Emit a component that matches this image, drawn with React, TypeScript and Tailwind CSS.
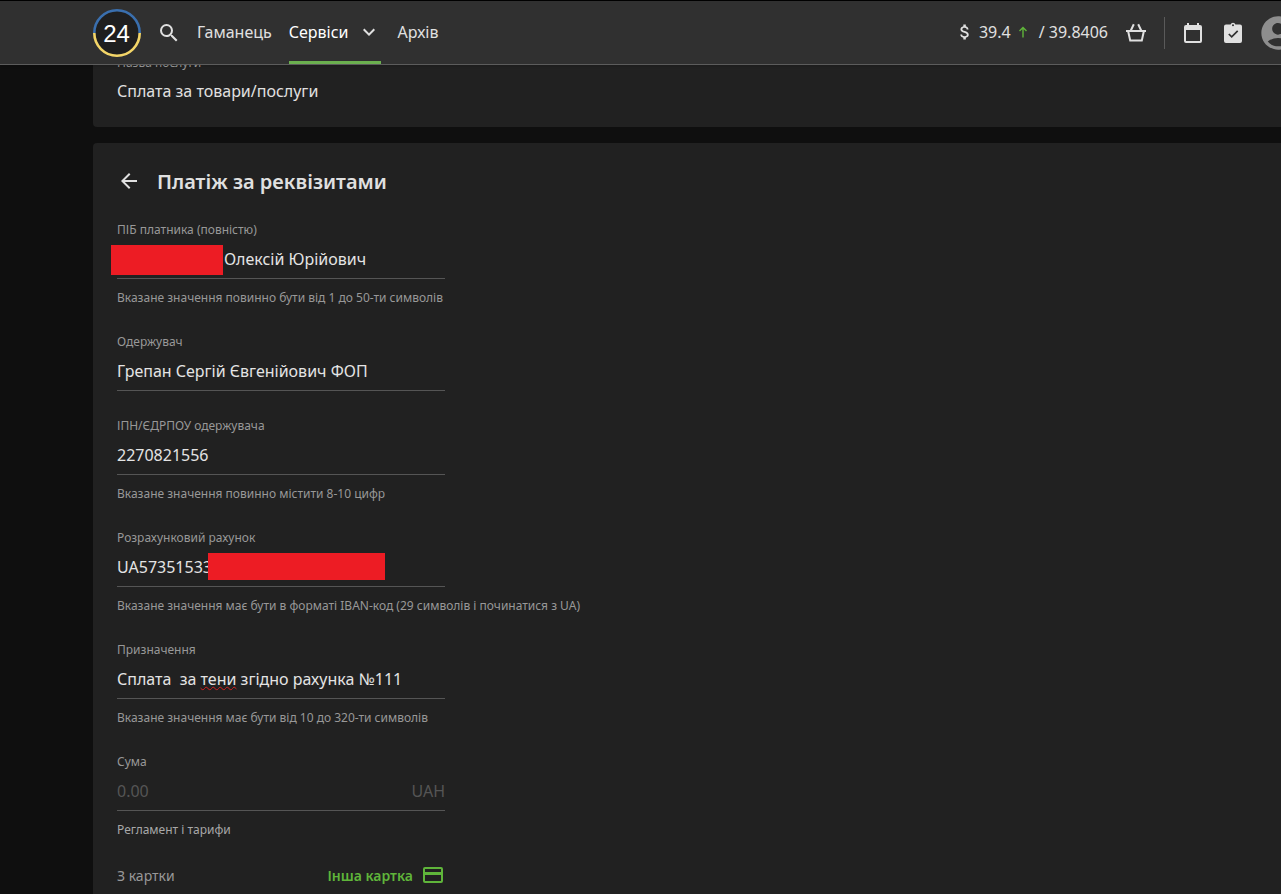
import React, { useState } from "react";
import { MdAccountCircle, MdArrowBack, MdAttachMoney, MdExpandMore, MdSearch } from "react-icons/md";

function Logo() {
  return (
    <svg viewBox="0 0 48 48" className="size-12 shrink-0" role="img" aria-label="24">
      <circle cx="24" cy="24" r="22.8" fill="#1f1f1f" />
      <path d="M1.3 24a22.7 22.7 0 0 1 45.4 0" fill="none" stroke="#3a6fae" strokeWidth="2.6" />
      <path d="M1.3 24a22.7 22.7 0 0 0 45.4 0" fill="none" stroke="#f3d568" strokeWidth="2.6" />
      <text x="23.5" y="32.5" textAnchor="middle" fontSize="24" fill="#ffffff" fontFamily="'Liberation Sans', sans-serif">
        24
      </text>
    </svg>
  );
}

function BasketIcon() {
  return (
    <svg viewBox="0 0 24 24" className="size-6" fill="none" stroke="currentColor" strokeWidth="2" aria-hidden="true">
      <path d="M2 10h20M4.2 10.5l2 9h11.6l2-9M6.8 9.5l3-6.2M17.2 9.5l-3-6.2" />
    </svg>
  );
}

function RiseIcon() {
  return (
    <svg viewBox="0 0 12 12" className="size-3" fill="none" stroke="currentColor" strokeWidth="1.4" aria-hidden="true">
      <path d="M6 11.5V1.5M2.5 5L6 1.5 9.5 5" />
    </svg>
  );
}

function CalendarIcon() {
  return (
    <svg viewBox="0 0 24 24" className="size-6" fill="currentColor" aria-hidden="true">
      <path d="M19 20H5V9h14v11M16 2v2H8V2H6v2H5a2 2 0 0 0-2 2v14a2 2 0 0 0 2 2h14a2 2 0 0 0 2-2V6a2 2 0 0 0-2-2h-1V2h-2z" fillRule="evenodd" />
    </svg>
  );
}

function ClipboardIcon() {
  return (
    <svg viewBox="0 0 24 24" className="size-6" aria-hidden="true">
      <path
        fill="currentColor"
        fillRule="evenodd"
        d="M19 3.5h-4.6a2.5 2.5 0 0 0-4.8 0H5a2 2 0 0 0-2 2V20a2 2 0 0 0 2 2h14a2 2 0 0 0 2-2V5.500a2 2 0 0 0-2-2zm-7-.2a1 1 0 1 1 0 2 1 1 0 0 1 0-2z"
      />
      <path d="M7.8 13l2.900 2.900 6-6" fill="none" stroke="#303030" strokeWidth="1.7" />
    </svg>
  );
}

function CardIcon() {
  return (
    <svg viewBox="0 0 24 24" className="size-6" fill="currentColor" aria-hidden="true">
      <path fillRule="evenodd" d="M20 4H4a2 2 0 0 0-2 2v12a2 2 0 0 0 2 2h16a2 2 0 0 0 2-2V6a2 2 0 0 0-2-2zm0 14H4v-6h16v6zm0-9H4V6h16v3z" />
    </svg>
  );
}

type FieldProps = {
  id: string;
  label: string;
  hint?: string;
  children: React.ReactNode;
};

function Field({ id, label, hint, children }: FieldProps) {
  return (
    <div className="w-[328px]">
      <label htmlFor={id} className="block h-5 text-xs leading-[22px] text-[#989898]">
        {label}
      </label>
      <div className="relative flex h-10 items-center border-b border-[#555555]">{children}</div>
      {hint && <p className="mt-2 h-5 text-xs leading-[22px] whitespace-nowrap text-[#989898]">{hint}</p>}
    </div>
  );
}

const inputClass = "w-full min-w-0 flex-1 bg-transparent text-base text-[#e4e4e4] outline-none placeholder:text-[#555555]";

export default function App() {
  const [payer, setPayer] = useState("Олексій Юрійович");
  const [recipient, setRecipient] = useState("Грепан Сергій Євгенійович ФОП");
  const [taxId, setTaxId] = useState("2270821556");
  const [account, setAccount] = useState("UA57351533");
  const [amount, setAmount] = useState("");

  return (
    <div className="flex h-screen flex-col overflow-hidden bg-[#0f0f0f] font-['Noto_Sans','Open_Sans',sans-serif] text-[#e0e0e0]">
      <header className="z-10 flex h-[65px] shrink-0 items-center gap-4 border-t border-b border-t-black border-b-[#5c5c5c] bg-[#303030] pl-[93px] shadow-sm">
        <a href="#home" aria-label="Приват24">
          <Logo />
        </a>
        <button type="button" aria-label="Пошук">
          <MdSearch className="size-6" />
        </button>
        <nav className="flex h-full items-center gap-[17px] text-base">
          <a href="#wallet" className="pb-0.5">Гаманець</a>
          <a href="#services" className="flex h-full items-center gap-2 border-t border-b-3 border-t-transparent border-b-[#6bb04f] text-white">
            Сервіси
            <MdExpandMore className="size-6 text-[#e0e0e0]" />
          </a>
          <a href="#archive" className="pb-0.5">Архів</a>
        </nav>
        <div className="-mr-[17px] ml-auto flex shrink-0 items-center gap-4">
          <a href="#rates" className="flex items-center pb-0.5 text-base whitespace-nowrap">
            <MdAttachMoney className="mr-1 size-5" />
            39.4
            <span className="mr-2.5 ml-1.5 text-[#5fb53a]">
              <RiseIcon />
            </span>
            / 39.8406
          </a>
          <button type="button" aria-label="Кошик">
            <BasketIcon />
          </button>
          <div className="h-8 w-px bg-[#5a5a5a]" />
          <button type="button" aria-label="Календар">
            <CalendarIcon />
          </button>
          <button type="button" aria-label="Завдання">
            <ClipboardIcon />
          </button>
          <button type="button" aria-label="Профіль" className="-ml-[3px]">
            <MdAccountCircle className="size-10 text-[#8e8e8e]" />
          </button>
        </div>
      </header>

      <main className="min-h-0 flex-1 overflow-y-auto pl-[93px] [scrollbar-width:none]">
        <section className="-mt-3.5 rounded-l bg-[#212121] px-6 pb-4">
          <h2 className="h-5 text-xs leading-6 text-[#989898]">Назва послуги</h2>
          <p className="flex h-10 items-center text-base">Сплата за товари/послуги</p>
        </section>

        <section className="mt-4 rounded-l bg-[#212121] px-6 py-6">
          <div className="flex h-7 items-center gap-4">
            <button type="button" aria-label="Назад">
              <MdArrowBack className="size-6" />
            </button>
            <h1 className="pt-0.5 text-xl font-semibold">Платіж за реквізитами</h1>
          </div>

          <form className="mt-6 flex flex-col gap-6">
            <Field id="payer" label="ПІБ платника (повністю)" hint="Вказане значення повинно бути від 1 до 50-ти символів">
              <span className="mr-px mb-[3px] -ml-1.5 h-[30px] w-28 shrink-0 self-end bg-[#ed1c24]" />
              <input id="payer" className={inputClass} value={payer} onChange={(e) => setPayer(e.target.value)} />
            </Field>
            <Field id="recipient" label="Одержувач">
              <input id="recipient" className={inputClass} value={recipient} onChange={(e) => setRecipient(e.target.value)} />
            </Field>
            <Field id="tax" label="ІПН/ЄДРПОУ одержувача" hint="Вказане значення повинно містити 8-10 цифр">
              <input id="tax" className={inputClass} value={taxId} onChange={(e) => setTaxId(e.target.value)} />
            </Field>
            <Field id="account" label="Розрахунковий рахунок" hint="Вказане значення має бути в форматі IBAN-код (29 символів і починатися з UA)">
              <input id="account" className={inputClass} value={account} onChange={(e) => setAccount(e.target.value)} />
              <span className="absolute top-1.5 left-[91px] h-[27px] w-[177px] bg-[#ed1c24]" />
            </Field>
            <Field id="purpose" label="Призначення" hint="Вказане значення має бути від 10 до 320-ти символів">
              <div
                id="purpose"
                role="textbox"
                aria-label="Призначення"
                contentEditable
                suppressContentEditableWarning
                className="w-full text-base whitespace-pre text-[#e4e4e4] outline-none"
              >
                {"Сплата  за "}
                <span className="underline decoration-[#d32020] decoration-wavy decoration-1 underline-offset-1">тени</span>
                {" згідно рахунка №111"}
              </div>
            </Field>
            <div>
              <Field id="amount" label="Сума">
                <input id="amount" className={inputClass} placeholder="0.00" value={amount} onChange={(e) => setAmount(e.target.value)} />
                <span className="text-base text-[#555555]">UAH</span>
              </Field>
              <a href="#tariffs" className="mt-2 block h-5 w-fit text-xs leading-[22px] text-[#a8a8a8]">
                Регламент і тарифи
              </a>
            </div>
            <div className="flex h-6 w-[328px] items-center justify-between text-sm">
              <span className="pt-0.5 text-[#989898]">З картки</span>
              <button type="button" className="flex items-center gap-2 font-semibold text-[#5fb53a]">
                <span className="pt-0.5">Інша картка</span>
                <CardIcon />
              </button>
            </div>
          </form>
        </section>
      </main>
    </div>
  );
}
